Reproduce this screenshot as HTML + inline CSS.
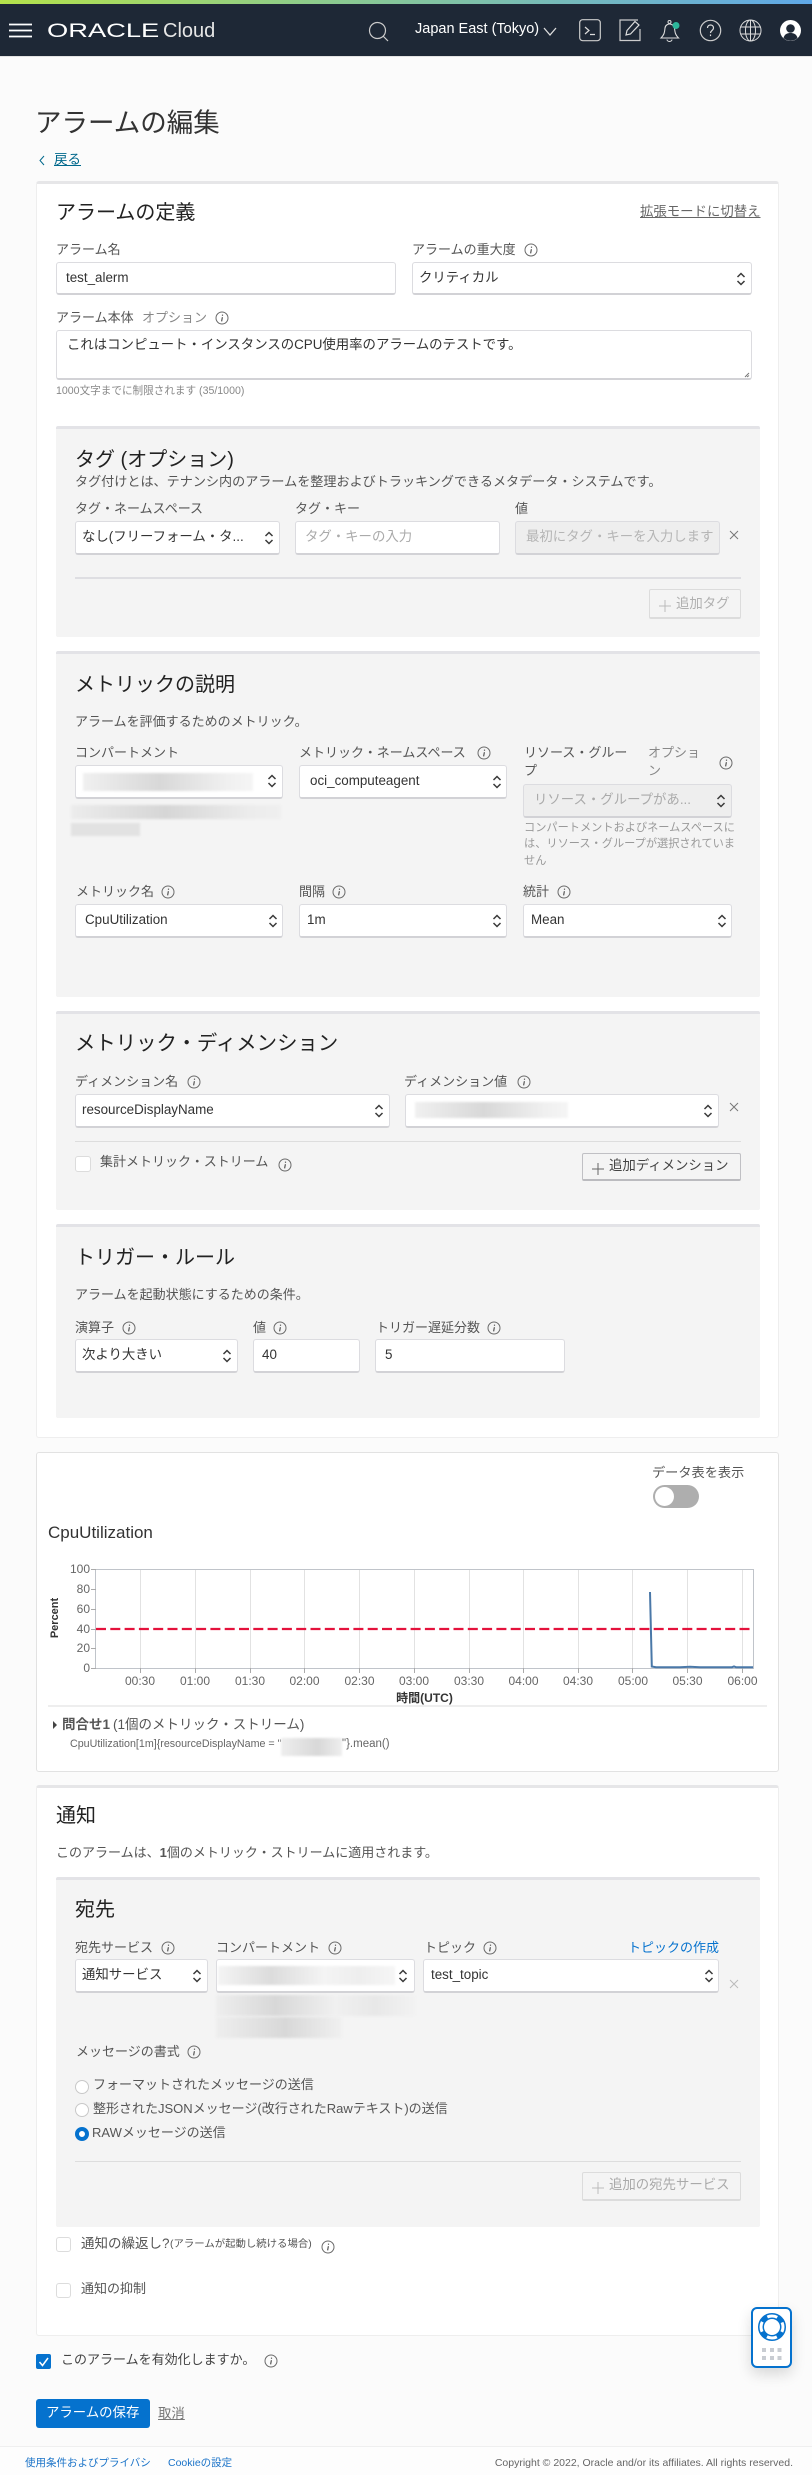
<!DOCTYPE html>
<html lang="ja"><head><meta charset="utf-8"><title>アラームの編集</title>
<style>
html,body{margin:0;padding:0;background:#fbfbfb;}
body{position:relative;width:812px;height:2475px;overflow:hidden;font-family:"Liberation Sans","Noto Sans CJK JP",sans-serif;color:#555;font-size:13px;}
.t{position:absolute;white-space:nowrap;line-height:20px;font-size:13px;color:#555;}
.h{font-size:20px;line-height:28px;color:#222;margin-top:1px;}
.lab{color:#555;font-size:13px}
.v{color:#333;font-size:13.4px}
.b{position:absolute;box-sizing:border-box;}
.card{background:#fff;border:1px solid #eee;border-top:3px solid #e6e6e8;border-radius:3px;}
.panel{background:#f4f4f4;border-top:3px solid #e3e3e7;border-radius:2px;}
.f{background:#fff;border:1px solid #dcdce0;border-bottom:2px solid #d2d2d6;border-radius:3px;}
.dis{background:#eee;}
.btn{border:1px solid #c0c0c4;border-bottom:2px solid #bbbbbf;border-radius:2px;}
.btnd{border-color:#dcdcdc;}
.hr{position:absolute;left:75px;width:666px;height:1px;background:#ddd;}
.blur{position:absolute;background:linear-gradient(90deg,#ececec,#d6d6d6 45%,#ececec 85%,#efefef);filter:blur(1px);}
.cb{position:absolute;width:15px;height:15px;box-sizing:border-box;background:#fff;border:1px solid #dcdcdc;border-radius:3px;}
svg.i{position:absolute;width:14px;height:14px;}
svg.a{position:absolute;width:10px;height:16px;}
svg.x{position:absolute;width:10px;height:10px;}
svg.p{position:absolute;width:12px;height:12px;}
.ic{position:absolute;top:20px;}
.u{text-decoration:underline;}
</style></head><body>
<svg width="0" height="0" style="position:absolute">
<symbol id="info" viewBox="0 0 14 14"><circle cx="7" cy="7" r="6" fill="none" stroke="#6a6a6a" stroke-width="1"/><path d="M7.4 6.2 6.6 10.4" stroke="#555" stroke-width="1.2" fill="none"/><path d="M7.5 3.6v1.2" stroke="#555" stroke-width="1.2"/></symbol>
<symbol id="arr" viewBox="0 0 10 16"><path d="M1.5 6 5 2.5 8.5 6M1.5 10 5 13.5 8.5 10" fill="none" stroke="#3a3a3a" stroke-width="1.5"/></symbol>
<symbol id="x" viewBox="0 0 10 10"><path d="M1 1 9 9M9 1 1 9" stroke="#777" stroke-width="1" fill="none"/></symbol>
<symbol id="plus" viewBox="0 0 12 12"><path d="M6 0v12M0 6h12" stroke="currentColor" stroke-width="1" fill="none"/></symbol>
</svg>

<!-- header -->
<div class="b" style="left:0;top:0;width:812px;height:57px;background:#1e2836;border-bottom:1px solid #e3e3e3"></div>
<div class="b" style="left:0;top:0;width:812px;height:4px;background:linear-gradient(90deg,#b4e24b,#8ccb8e 40%,#5fa8e8)"></div>
<svg class="b" style="left:9px;top:22px" width="24" height="17"><path d="M0 2.5h23M0 8.5h23M0 14.5h23" stroke="#fff" stroke-width="1.7"/></svg>
<div class="t" style="left:47px;top:20px;font-size:19.5px;line-height:22px;color:#fff;transform:scaleX(1.4);transform-origin:0 50%;">ORACLE</div>
<div class="t" style="left:163px;top:20px;font-size:20px;line-height:22px;color:#e6e6e6;">Cloud</div>
<svg class="ic" style="left:368px;top:21px" width="22" height="21"><circle cx="9.5" cy="9.5" r="8" fill="none" stroke="#ccc" stroke-width="1.2"/><path d="M15 15 20 20" stroke="#ccc" stroke-width="1.2"/></svg>
<div class="t" style="left:415px;top:19px;font-size:14.5px;color:#fff;">Japan East (Tokyo)</div>
<svg class="ic" style="left:543px;top:27px" width="14" height="9"><path d="M1 1 7 8 13 1" fill="none" stroke="#ddd" stroke-width="1.3"/></svg>
<svg class="ic" style="left:579px;top:19px" width="22" height="23"><rect x=".7" y=".7" width="20.6" height="21" rx="3" fill="none" stroke="#ccc" stroke-width="1.2"/><path d="M6 8 10 11.5 6 15M11 15.5h5" fill="none" stroke="#ddd" stroke-width="1.2"/></svg>
<svg class="ic" style="left:618px;top:19px" width="24" height="23"><path d="M20 1H2v20.500h20V10" fill="none" stroke="#ccc" stroke-width="1.2"/><path d="M8 16l1-4.5L17 2.5l4 3.5-8.5 9z" fill="none" stroke="#ddd" stroke-width="1.2"/></svg>
<svg class="ic" style="left:659px;top:19px" width="24" height="24"><path d="M2 19c3-3 3.500-5 4-10 .4-3 3-4 4.500-4S15 6 15.500 9c.5 5 1 7 4 10z" fill="none" stroke="#ddd" stroke-width="1.1"/><circle cx="10.5" cy="3" r="1.5" fill="none" stroke="#ddd"/><path d="M8 20.500a2.500 2 0 0 0 5 0" fill="none" stroke="#ddd"/><circle cx="17" cy="6.5" r="3.5" fill="#2db79b"/></svg>
<svg class="ic" style="left:699px;top:19px" width="23" height="23"><circle cx="11.5" cy="11.5" r="10.2" fill="none" stroke="#ccc" stroke-width="1.2"/><path d="M8.500 9c0-4 6-4 6 0 0 2.500-3 2.500-3 5" fill="none" stroke="#ddd" stroke-width="1.2"/><path d="M11.5 15.5v1.6" stroke="#ddd" stroke-width="1.2"/></svg>
<svg class="ic" style="left:739px;top:19px" width="23" height="23"><g fill="none" stroke="#ddd" stroke-width="1"><circle cx="11.5" cy="11.5" r="10.5"/><ellipse cx="11.5" cy="11.5" rx="5" ry="10.5"/><path d="M11.5 1v21M1.500 8h20M1.500 15h20"/></g></svg>
<svg class="ic" style="left:780px;top:20px" width="21" height="21"><circle cx="10.5" cy="10.5" r="10.5" fill="#fff"/><circle cx="10.5" cy="8.5" r="4.3" fill="#1e2836"/><path d="M3.500 18c1-4 4-5 7-5s6 1 7 5a10 10 0 0 1-14 0z" fill="#1e2836"/></svg>

<!-- title -->
<div class="t" style="left:35px;top:105px;font-size:26.5px;line-height:36px;color:#333;">アラームの編集</div>
<svg class="b" style="left:38px;top:155px" width="8" height="11"><path d="M6 1 2 5.500 6 10" fill="none" stroke="#00688c" stroke-width="1"/></svg>
<div class="t u" style="left:54px;top:150px;font-size:13.5px;color:#00688c;">戻る</div>

<!-- main card -->
<div class="b card" style="left:36px;top:181px;width:743px;height:1257px;"></div>
<div class="t h" style="left:56px;top:198px;">アラームの定義</div>
<div class="t u" style="left:640px;top:202px;font-size:13.4px;color:#666;">拡張モードに切替え</div>

<div class="t lab" style="left:56px;top:240px;">アラーム名</div>
<div class="b f" style="left:56px;top:262px;width:340px;height:33px;"></div>
<div class="t v" style="left:66px;top:268px;">test_alerm</div>
<div class="t lab" style="left:412px;top:240px;">アラームの重大度</div>
<svg class="i" style="left:524px;top:243px"><use href="#info"/></svg>
<div class="b f" style="left:412px;top:262px;width:340px;height:33px;"></div>
<div class="t v" style="left:419px;top:268px;">クリティカル</div>
<svg class="a" style="left:736px;top:271px"><use href="#arr"/></svg>

<div class="t lab" style="left:56px;top:308px;">アラーム本体</div>
<div class="t" style="left:142px;top:308px;color:#888;">オプション</div>
<svg class="i" style="left:215px;top:311px"><use href="#info"/></svg>
<div class="b f" style="left:56px;top:330px;width:696px;height:50px;"></div>
<div class="t v" style="left:67px;top:335px;">これはコンピュート・インスタンスのCPU使用率のアラームのテストです。</div>
<svg class="b" style="left:744px;top:372px" width="6" height="6"><path d="M5 1 1 5M5 3.500 3 5" stroke="#777" fill="none"/></svg>
<div class="t" style="left:56px;top:381px;font-size:10.6px;color:#888;">1000文字までに制限されます (35/1000)</div>

<!-- tags -->
<div class="b panel" style="left:56px;top:426px;width:704px;height:211px;"></div>
<div class="t h" style="left:75px;top:445px;">タグ (オプション)</div>
<div class="t" style="left:75px;top:472px;font-size:13.1px;">タグ付けとは、テナンシ内のアラームを整理およびトラッキングできるメタデータ・システムです。</div>
<div class="t lab" style="left:75px;top:499px;">タグ・ネームスペース</div>
<div class="t lab" style="left:295px;top:499px;">タグ・キー</div>
<div class="t lab" style="left:515px;top:499px;">値</div>
<div class="b f" style="left:75px;top:521px;width:205px;height:34px;"></div>
<div class="t v" style="left:82px;top:527px;">なし(フリーフォーム・タ...</div>
<svg class="a" style="left:264px;top:530px"><use href="#arr"/></svg>
<div class="b f" style="left:295px;top:521px;width:205px;height:34px;"></div>
<div class="t v" style="left:305px;top:527px;color:#aaa;">タグ・キーの入力</div>
<div class="b f dis" style="left:515px;top:521px;width:205px;height:34px;"></div>
<div class="t v" style="left:526px;top:527px;color:#b5b5b5;">最初にタグ・キーを入力します</div>
<svg class="x" style="left:729px;top:530px"><use href="#x"/></svg>
<div class="hr" style="top:577px;height:2px;background:#dedee2;"></div>
<div class="b btn btnd" style="left:649px;top:589px;width:92px;height:30px;"></div>
<svg class="p" style="left:659px;top:600px;color:#bbb"><use href="#plus"/></svg>
<div class="t" style="left:676px;top:594px;font-size:13.4px;color:#b0b0b0;">追加タグ</div>

<!-- metric -->
<div class="b panel" style="left:56px;top:651px;width:704px;height:346px;"></div>
<div class="t h" style="left:75px;top:670px;">メトリックの説明</div>
<div class="t" style="left:75px;top:712px;">アラームを評価するためのメトリック。</div>
<div class="t lab" style="left:75px;top:743px;">コンパートメント</div>
<div class="t lab" style="left:299px;top:743px;">メトリック・ネームスペース</div>
<svg class="i" style="left:477px;top:746px"><use href="#info"/></svg>
<div class="t lab" style="left:524px;top:743px;">リソース・グルー</div>
<div class="t lab" style="left:524px;top:761px;">プ</div>
<div class="t" style="left:648px;top:743px;color:#888;">オプショ</div>
<div class="t" style="left:648px;top:761px;color:#888;">ン</div>
<svg class="i" style="left:719px;top:756px"><use href="#info"/></svg>
<div class="b f" style="left:75px;top:765px;width:208px;height:34px;"></div>
<div class="blur" style="left:83px;top:773px;width:170px;height:18px;background:linear-gradient(90deg,#f0f0f0,#d8d8d8 45%,#f0f0f0 85%,#f5f5f5);"></div>
<svg class="a" style="left:267px;top:773px"><use href="#arr"/></svg>
<div class="blur" style="left:71px;top:805px;width:210px;height:14px;"></div>
<div class="blur" style="left:71px;top:823px;width:69px;height:13px;background:#e2e2e2;"></div>
<div class="b f" style="left:299px;top:765px;width:208px;height:34px;"></div>
<div class="t v" style="left:310px;top:771px;">oci_computeagent</div>
<svg class="a" style="left:492px;top:774px"><use href="#arr"/></svg>
<div class="b f dis" style="left:523px;top:784px;width:209px;height:34px;"></div>
<div class="t v" style="left:534px;top:790px;color:#aaa;">リソース・グループがあ...</div>
<svg class="a" style="left:716px;top:793px"><use href="#arr"/></svg>
<div class="t" style="left:524px;top:818px;font-size:11.2px;color:#999;">コンパートメントおよびネームスペースに</div>
<div class="t" style="left:524px;top:834px;font-size:11.2px;color:#999;">は、リソース・グループが選択されていま</div>
<div class="t" style="left:524px;top:851px;font-size:11.2px;color:#999;">せん</div>
<div class="t lab" style="left:76px;top:882px;">メトリック名</div>
<svg class="i" style="left:161px;top:885px"><use href="#info"/></svg>
<div class="t lab" style="left:299px;top:882px;">間隔</div>
<svg class="i" style="left:332px;top:885px"><use href="#info"/></svg>
<div class="t lab" style="left:523px;top:882px;">統計</div>
<svg class="i" style="left:557px;top:885px"><use href="#info"/></svg>
<div class="b f" style="left:75px;top:904px;width:208px;height:34px;"></div>
<div class="t v" style="left:85px;top:910px;">CpuUtilization</div>
<svg class="a" style="left:268px;top:913px"><use href="#arr"/></svg>
<div class="b f" style="left:299px;top:904px;width:208px;height:34px;"></div>
<div class="t v" style="left:307px;top:910px;">1m</div>
<svg class="a" style="left:492px;top:913px"><use href="#arr"/></svg>
<div class="b f" style="left:523px;top:904px;width:209px;height:34px;"></div>
<div class="t v" style="left:531px;top:910px;">Mean</div>
<svg class="a" style="left:717px;top:913px"><use href="#arr"/></svg>

<!-- dimensions -->
<div class="b panel" style="left:56px;top:1011px;width:704px;height:199px;"></div>
<div class="t h" style="left:75px;top:1029px;font-size:20.4px;">メトリック・ディメンション</div>
<div class="t lab" style="left:75px;top:1072px;">ディメンション名</div>
<svg class="i" style="left:187px;top:1075px"><use href="#info"/></svg>
<div class="t lab" style="left:404px;top:1072px;">ディメンション値</div>
<svg class="i" style="left:517px;top:1075px"><use href="#info"/></svg>
<div class="b f" style="left:75px;top:1094px;width:315px;height:34px;"></div>
<div class="t v" style="left:82px;top:1100px;">resourceDisplayName</div>
<svg class="a" style="left:374px;top:1103px"><use href="#arr"/></svg>
<div class="b f" style="left:405px;top:1094px;width:314px;height:34px;"></div>
<div class="blur" style="left:415px;top:1102px;width:153px;height:16px;background:linear-gradient(90deg,#f0f0f0,#d8d8d8 45%,#f0f0f0 85%,#f5f5f5);"></div>
<svg class="a" style="left:703px;top:1103px"><use href="#arr"/></svg>
<svg class="x" style="left:729px;top:1102px"><use href="#x"/></svg>
<div class="hr" style="top:1141px;"></div>
<div class="cb" style="left:75px;top:1156px;width:16px;height:16px;"></div>
<div class="t lab" style="left:100px;top:1152px;">集計メトリック・ストリーム</div>
<svg class="i" style="left:278px;top:1158px"><use href="#info"/></svg>
<div class="b btn" style="left:582px;top:1153px;width:159px;height:28px;"></div>
<svg class="p" style="left:592px;top:1163px;color:#666"><use href="#plus"/></svg>
<div class="t" style="left:609px;top:1156px;font-size:13.4px;color:#444;">追加ディメンション</div>

<!-- trigger -->
<div class="b panel" style="left:56px;top:1224px;width:704px;height:194px;"></div>
<div class="t h" style="left:75px;top:1243px;">トリガー・ルール</div>
<div class="t" style="left:75px;top:1285px;">アラームを起動状態にするための条件。</div>
<div class="t lab" style="left:75px;top:1318px;">演算子</div>
<svg class="i" style="left:122px;top:1321px"><use href="#info"/></svg>
<div class="t lab" style="left:253px;top:1318px;">値</div>
<svg class="i" style="left:273px;top:1321px"><use href="#info"/></svg>
<div class="t lab" style="left:376px;top:1318px;">トリガー遅延分数</div>
<svg class="i" style="left:487px;top:1321px"><use href="#info"/></svg>
<div class="b f" style="left:75px;top:1339px;width:163px;height:34px;"></div>
<div class="t v" style="left:82px;top:1345px;">次より大きい</div>
<svg class="a" style="left:222px;top:1348px"><use href="#arr"/></svg>
<div class="b f" style="left:253px;top:1339px;width:107px;height:34px;"></div>
<div class="t v" style="left:262px;top:1345px;">40</div>
<div class="b f" style="left:375px;top:1339px;width:190px;height:34px;"></div>
<div class="t v" style="left:385px;top:1345px;">5</div>

<!-- chart card -->
<div class="b" style="left:36px;top:1452px;width:743px;height:320px;background:#fff;border:1px solid #e2e2e2;border-radius:3px;"></div>
<div class="t" style="left:652px;top:1463px;font-size:13.2px;">データ表を表示</div>
<div class="b" style="left:653px;top:1485px;width:46px;height:23px;border-radius:12px;background:#aeaeae;"></div>
<div class="b" style="left:655px;top:1487px;width:19px;height:19px;border-radius:50%;background:#fff;"></div>
<div class="t" style="left:48px;top:1522px;font-size:17px;line-height:22px;color:#333;">CpuUtilization</div>

<svg class="b" style="left:40px;top:1555px" width="730" height="155" font-family="Liberation Sans, Noto Sans CJK JP, sans-serif">
<g transform="translate(-40,-1555)">
<g stroke="#e2e2e2" stroke-width="1"><path d="M140.500 1569v99M195.500 1569v99M250.500 1569v99M304.500 1569v99M359.500 1569v99M414.500 1569v99M469.500 1569v99M523.500 1569v99M578.500 1569v99M632.500 1569v99M687.500 1569v99M742.500 1569v99"/></g>
<rect x="95.5" y="1569.5" width="658" height="99" fill="none" stroke="#c0c4ca" stroke-width="1"/>
<g stroke="#aaa"><path d="M91 1569.500h5M91 1589.500h5M91 1609.500h5M91 1629.500h5M91 1648.500h5M91 1668.500h5M140.500 1668v5M195.500 1668v5M250.500 1668v5M304.500 1668v5M359.500 1668v5M414.500 1668v5M469.500 1668v5M523.500 1668v5M578.500 1668v5M632.500 1668v5M687.500 1668v5M742.500 1668v5"/></g>
<path d="M96 1629h656" stroke="#e4123c" stroke-width="2.2" stroke-dasharray="10 4.3" fill="none"/>
<path d="M650 1592 651.800 1666.500 656 1667.200H680L690 1666.800 700 1667.200H732L734 1666.400 736 1667.200H753" fill="none" stroke="#4a78a8" stroke-width="2"/>
<g font-size="12" fill="#666" text-anchor="end"><text x="90" y="1573">100</text><text x="90" y="1593">80</text><text x="90" y="1613">60</text><text x="90" y="1633">40</text><text x="90" y="1652">20</text><text x="90" y="1672">0</text></g>
<g font-size="12" fill="#666" text-anchor="middle"><text x="140" y="1685">00:30</text><text x="195" y="1685">01:00</text><text x="250" y="1685">01:30</text><text x="304.5" y="1685">02:00</text><text x="359.5" y="1685">02:30</text><text x="414" y="1685">03:00</text><text x="469" y="1685">03:30</text><text x="523.5" y="1685">04:00</text><text x="578" y="1685">04:30</text><text x="633" y="1685">05:00</text><text x="687.5" y="1685">05:30</text><text x="742.5" y="1685">06:00</text></g>
<text x="424.5" y="1702" font-size="12" font-weight="bold" fill="#333" text-anchor="middle">時間(UTC)</text>
<text transform="translate(58,1618) rotate(-90)" font-size="11" font-weight="bold" fill="#333" text-anchor="middle">Percent</text>
</g></svg>
<div class="b" style="left:48px;top:1705px;width:719px;height:2px;background:#eee;"></div>
<svg class="b" style="left:53px;top:1721px" width="4" height="8"><path d="M0 0 4 4 0 8z" fill="#444"/></svg>
<div class="t" style="left:62px;top:1715px;font-size:13.5px;font-weight:bold;color:#555;">問合せ1</div>
<div class="t" style="left:113px;top:1715px;font-size:13.5px;color:#555;">(1個のメトリック・ストリーム)</div>
<div class="t" style="left:70px;top:1734px;font-size:10.7px;color:#666;">CpuUtilization[1m]{resourceDisplayName = "</div>
<div class="blur" style="left:281px;top:1738px;width:61px;height:18px;background:linear-gradient(90deg,#eee,#d8d8d8 60%,#eee);"></div>
<div class="t" style="left:342px;top:1734px;font-size:11.5px;color:#666;">"}.mean()</div>

<!-- notification card -->
<div class="b card" style="left:36px;top:1785px;width:743px;height:551px;"></div>
<div class="t h" style="left:56px;top:1801px;">通知</div>
<div class="t" style="left:56px;top:1843px;">このアラームは、<b>1</b>個のメトリック・ストリームに適用されます。</div>
<div class="b panel" style="left:56px;top:1877px;width:704px;height:350px;"></div>
<div class="t h" style="left:75px;top:1895px;">宛先</div>
<div class="t lab" style="left:75px;top:1938px;">宛先サービス</div>
<svg class="i" style="left:161px;top:1941px"><use href="#info"/></svg>
<div class="t lab" style="left:216px;top:1938px;">コンパートメント</div>
<svg class="i" style="left:328px;top:1941px"><use href="#info"/></svg>
<div class="t lab" style="left:424px;top:1938px;">トピック</div>
<svg class="i" style="left:483px;top:1941px"><use href="#info"/></svg>
<div class="t" style="left:628px;top:1938px;color:#0572ce;">トピックの作成</div>
<div class="b f" style="left:75px;top:1959px;width:133px;height:34px;"></div>
<div class="t v" style="left:82px;top:1965px;">通知サービス</div>
<svg class="a" style="left:192px;top:1968px"><use href="#arr"/></svg>
<div class="b f" style="left:216px;top:1959px;width:199px;height:34px;"></div>
<div class="blur" style="left:218px;top:1966px;width:177px;height:19px;background:linear-gradient(90deg,#f4f4f4,#dcdcdc 30%,#f4f4f4 60%,#eee 80%,#f6f6f6);"></div>
<svg class="a" style="left:398px;top:1968px"><use href="#arr"/></svg>
<div class="blur" style="left:216px;top:1995px;width:199px;height:21px;background:linear-gradient(90deg,#eee,#d8d8d8 30%,#f0f0f0 60%,#e8e8e8 80%,#f2f2f2);"></div>
<div class="blur" style="left:216px;top:2017px;width:126px;height:21px;background:linear-gradient(90deg,#eee,#d8d8d8 55%,#f0f0f0);"></div>
<div class="b f" style="left:423px;top:1959px;width:296px;height:34px;"></div>
<div class="t v" style="left:431px;top:1965px;">test_topic</div>
<svg class="a" style="left:704px;top:1968px"><use href="#arr"/></svg>
<svg class="x" style="left:729px;top:1979px;opacity:.45"><use href="#x"/></svg>
<div class="t lab" style="left:76px;top:2042px;">メッセージの書式</div>
<svg class="i" style="left:187px;top:2045px"><use href="#info"/></svg>
<div class="b" style="left:75px;top:2080px;width:14px;height:14px;border:1px solid #c8c8c8;border-radius:50%;background:#fff;"></div>
<div class="t lab" style="left:93px;top:2075px;">フォーマットされたメッセージの送信</div>
<div class="b" style="left:75px;top:2103px;width:14px;height:14px;border:1px solid #c8c8c8;border-radius:50%;background:#fff;"></div>
<div class="t lab" style="left:93px;top:2099px;">整形されたJSONメッセージ(改行されたRawテキスト)の送信</div>
<div class="b" style="left:75px;top:2127px;width:14px;height:14px;border:4px solid #0572ce;border-radius:50%;background:#fff;"></div>
<div class="t lab" style="left:92px;top:2123px;">RAWメッセージの送信</div>
<div class="hr" style="top:2161px;"></div>
<div class="b btn btnd" style="left:582px;top:2172px;width:159px;height:29px;"></div>
<svg class="p" style="left:592px;top:2182px;color:#bbb"><use href="#plus"/></svg>
<div class="t" style="left:609px;top:2175px;font-size:13.4px;color:#aaa;">追加の宛先サービス</div>
<div class="cb" style="left:56px;top:2237px;"></div>
<div class="t lab" style="left:81px;top:2234px;font-size:13.5px;">通知の繰返し?</div>
<div class="t" style="left:170px;top:2235px;font-size:10.4px;color:#555;">(アラームが起動し続ける場合)</div>
<svg class="i" style="left:321px;top:2240px"><use href="#info"/></svg>
<div class="cb" style="left:56px;top:2283px;"></div>
<div class="t lab" style="left:81px;top:2279px;">通知の抑制</div>

<!-- enable -->
<div class="b" style="left:36px;top:2354px;width:15px;height:15px;background:#0572ce;border-radius:2px;"></div>
<svg class="b" style="left:38px;top:2356px" width="12" height="12"><path d="M1.500 6 4.500 9.500 10 2" fill="none" stroke="#fff" stroke-width="1.5"/></svg>
<div class="t" style="left:61px;top:2350px;color:#444;">このアラームを有効化しますか。</div>
<svg class="i" style="left:264px;top:2354px"><use href="#info"/></svg>
<div class="b" style="left:36px;top:2399px;width:114px;height:29px;background:#0572ce;border-radius:3px;"></div>
<div class="t" style="left:46px;top:2403px;font-size:13.4px;color:#fff;">アラームの保存</div>
<div class="t u" style="left:158px;top:2404px;font-size:13.4px;color:#777;">取消</div>

<!-- help widget -->
<div class="b" style="left:751px;top:2307px;width:41px;height:61px;background:#fff;border:2px solid #0572ce;border-radius:6px;box-shadow:0 6px 14px rgba(0,0,0,.14);"></div>
<svg class="b" style="left:757px;top:2312px" width="30" height="30"><circle cx="15" cy="15" r="11" fill="none" stroke="#0572ce" stroke-width="6"/><circle cx="15" cy="15" r="11" fill="none" stroke="#fff" stroke-width="3" stroke-dasharray="10.28 7" stroke-dashoffset="5.14"/></svg>
<svg class="b" style="left:761px;top:2348px" width="22" height="15" fill="#c8ccd2"><rect x="1" y="0" width="4" height="4"/><rect x="9" y="0" width="4" height="4"/><rect x="16.5" y="0" width="4" height="4"/><rect x="1" y="8" width="4" height="4"/><rect x="9" y="8" width="4" height="4"/><rect x="16.5" y="8" width="4" height="4"/></svg>

<!-- footer -->
<div class="b" style="left:0;top:2446px;width:812px;height:29px;background:#fdfdfd;border-top:1px solid #efefef;"></div>
<div class="t" style="left:25px;top:2453px;font-size:10.5px;color:#1a73c8;">使用条件およびプライバシ</div>
<div class="t" style="left:168px;top:2453px;font-size:10.5px;color:#1a73c8;">Cookieの設定</div>
<div class="t" style="right:19px;top:2453px;font-size:10.5px;color:#666;">Copyright © 2022, Oracle and/or its affiliates. All rights reserved.</div>
</body></html>
